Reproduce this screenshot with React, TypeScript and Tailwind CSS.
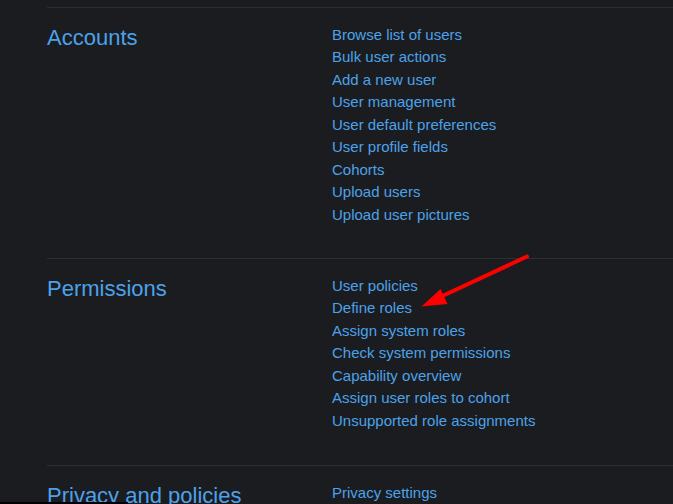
import React from "react";

const sections: { title: string; links: string[]; pb: string }[] = [
  {
    title: "Accounts",
    pb: "pb-[31px]",
    links: [
      "Browse list of users",
      "Bulk user actions",
      "Add a new user",
      "User management",
      "User default preferences",
      "User profile fields",
      "Cohorts",
      "Upload users",
      "Upload user pictures",
    ],
  },
  {
    title: "Permissions",
    pb: "pb-[32px]",
    links: [
      "User policies",
      "Define roles",
      "Assign system roles",
      "Check system permissions",
      "Capability overview",
      "Assign user roles to cohort",
      "Unsupported role assignments",
    ],
  },
  {
    title: "Privacy and policies",
    pb: "pb-[31px]",
    links: ["Privacy settings"],
  },
];

export default function App() {
  return (
    <div
      className="relative w-[673px] h-[504px] overflow-hidden bg-[#1b1c1f]"
      style={{ fontFamily: '"Liberation Sans", Arial, sans-serif' }}
    >
      <div className="pt-[7px] pl-[47px]">
        {sections.map((s) => (
          <div
            key={s.title}
            className={`border-t border-[#2c2e31] pt-[16.5px] ${s.pb} grid grid-cols-[285px_1fr]`}
          >
            <h3 className="text-[22px] leading-[26.4px] text-[#4ca2ea] font-normal whitespace-nowrap">
              {s.title}
            </h3>
            <ul className="flex flex-col -mt-[1px] mb-[1px]">
              {s.links.map((l) => (
                <li
                  key={l}
                  className="text-[15px] leading-[22.5px] text-[#4ca2ea] whitespace-nowrap"
                >
                  {l}
                </li>
              ))}
            </ul>
          </div>
        ))}
      </div>
      <svg
        className="absolute left-0 top-0 pointer-events-none"
        width="673"
        height="504"
        viewBox="0 0 673 504"
      >
        <line
          x1="527"
          y1="256.5"
          x2="438"
          y2="298"
          stroke="#ff0000"
          strokeWidth="4"
          strokeLinecap="round"
        />
        <polygon points="421.5,306.5 440.5,289 447.5,304" fill="#ff0000" />
      </svg>
      <div className="absolute left-0 bottom-0 w-[128px] h-[2px] bg-black" />
    </div>
  );
}
